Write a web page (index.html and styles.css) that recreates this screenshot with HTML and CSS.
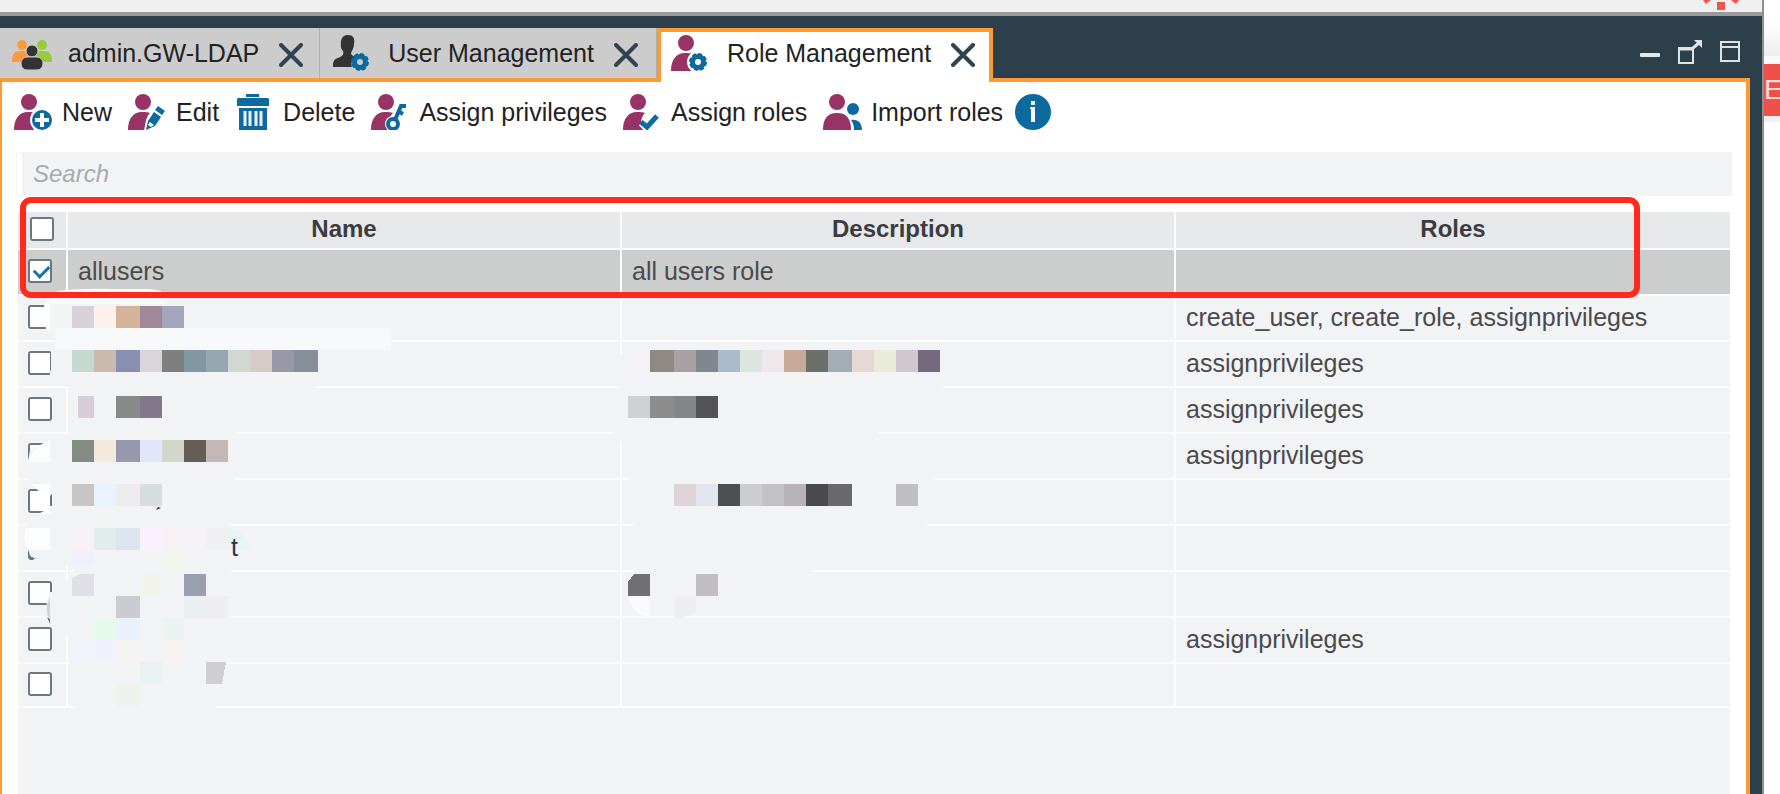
FILE: index.html
```html
<!DOCTYPE html>
<html lang="en">
<head>
    <meta charset="UTF-8">
    <meta name="viewport" content="width=device-width, initial-scale=1.0">
    <title>Role Management</title>
    <link rel="stylesheet" href="styles.css">
</head>
<body>
    <!-- Shared icon parts -->
    <svg class="defs" aria-hidden="true">
        <symbol id="person" viewBox="0 0 40 36">
            <ellipse cx="15" cy="8" rx="8" ry="8"/>
            <path d="M0 36 C0 25 5 18 14 18 C18 18 20 18 22 19 C18 23 17 29 20 36 Z"/>
        </symbol>
        <symbol id="gear" viewBox="0 0 18 18">
            <circle cx="9" cy="9" r="5.5" fill="none" stroke="#0c6a9e" stroke-width="5"/>
            <circle cx="9" cy="9" r="8" fill="none" stroke="#0c6a9e" stroke-width="2" stroke-dasharray="4 2.28"/>
        </symbol>
        <symbol id="cross" viewBox="0 0 24 24">
            <path d="M2 2 L22 22 M22 2 L2 22" fill="none" stroke="#2f4350" stroke-width="4" stroke-linecap="round"/>
        </symbol>
    </svg>

    <div class="window">
        <div class="top-strip">
            <svg class="spinner" width="40" height="12" viewBox="0 0 40 12" fill="#f0544c">
                <rect x="15" y="2" width="8" height="8"/>
                <path d="M1 0 H9 L4 4 Z M29 0 H37 L34 4 Z"/>
            </svg>
        </div>

        <div class="tab-bar">
            <div class="tab tab-first">
                <button type="button" class="tab-label">
                    <svg width="40" height="36" viewBox="0 0 40 36">
                        <g fill="#fc9a3a"><circle cx="10" cy="10" r="5"/><path d="M0 27 C0 19 2 16 9 16 C16 16 19 18 19 27 Z"/></g>
                        <g fill="#97ca3d"><circle cx="30" cy="10" r="5"/><path d="M40 27 C40 19 38 16 31 16 C24 16 21 18 21 27 Z"/></g>
                        <g fill="#333" stroke="#ccc" stroke-width="1"><circle cx="20" cy="16" r="6"/><rect x="9" y="22" width="22" height="13" rx="6"/></g>
                    </svg>
                    admin.GW-LDAP
                </button>
                <button type="button" class="close" aria-label="Close admin.GW-LDAP"><svg width="24" height="24"><use href="#cross"/></svg></button>
            </div>
            <div class="tab">
                <button type="button" class="tab-label">
                    <svg width="40" height="36" viewBox="0 0 40 36">
                        <path fill="#333" d="M16 0 C21 0 23 3 22 9 C22 13 20 15 19 18 C19 21 23 21 24 23 C19 26 19 29 20 32 H1 C1 26 2 24 6 23 C11 21 12 19 11 16 C8 13 9 10 9 6 C10 2 12 0 16 0 Z"/>
                        <use href="#gear" x="19" y="18" width="18" height="18"/>
                    </svg>
                    User Management
                </button>
                <button type="button" class="close" aria-label="Close User Management"><svg width="24" height="24"><use href="#cross"/></svg></button>
            </div>
            <div class="tab tab-active">
                <button type="button" class="tab-label">
                    <svg width="40" height="36" viewBox="0 0 40 36">
                        <use href="#person" width="40" height="36" fill="#993265"/>
                        <circle cx="27" cy="27" r="11" fill="#fff"/>
                        <use href="#gear" x="18" y="18" width="18" height="18"/>
                    </svg>
                    Role Management
                </button>
                <button type="button" class="close" aria-label="Close Role Management"><svg width="24" height="24"><use href="#cross"/></svg></button>
            </div>

            <div class="window-controls">
                <button type="button" aria-label="Minimize">
                    <svg width="24" height="28" viewBox="0 0 24 28"><rect x="2" y="15" width="20" height="4" rx="1" fill="#e4e7e8"/></svg>
                </button>
                <button type="button" aria-label="Restore">
                    <svg width="28" height="28" viewBox="0 0 28 28" fill="none" stroke="#dfe3e5">
                        <path d="M3 10 H17 V25 H3 Z" stroke-width="2"/>
                        <path d="M3 11 H17" stroke-width="3"/>
                        <path d="M17 10 L24 4" stroke-width="3"/>
                        <path d="M18 2 H26 V10 L23 7 Z" fill="#dfe3e5" stroke="none"/>
                    </svg>
                </button>
                <button type="button" aria-label="Maximize">
                    <svg width="24" height="28" viewBox="0 0 24 28" fill="none" stroke="#dfe3e5" stroke-width="2">
                        <path d="M3 4 H21 V23 H3 Z M3 9 H21"/>
                    </svg>
                </button>
            </div>
        </div>

        <div class="panel">
            <div class="toolbar">
                <button type="button">
                    <svg width="40" height="36" viewBox="0 0 40 36">
                        <use href="#person" width="40" height="36" fill="#993265"/>
                        <circle cx="28" cy="26" r="12" fill="#fff"/>
                        <circle cx="28" cy="26" r="10" fill="#0c6a9e"/>
                        <path d="M28 19 V33 M21 26 H35" stroke="#fff" stroke-width="4"/>
                    </svg>
                    New
                </button>
                <button type="button">
                    <svg width="40" height="36" viewBox="0 0 40 36">
                        <use href="#person" width="40" height="36" fill="#993265"/>
                        <path d="M16 37 L18 26 L29 12 L38 17 L27 33 Z" fill="#fff"/>
                        <path d="M18 36 L20 27 L26 18 L33 23 L27 32 Z M27 16 L30 12 L37 17 L34 21 Z" fill="#0c6a9e"/>
                        <path d="M20 31 L22 28 L26 31 L23 33 Z" fill="#fff"/>
                    </svg>
                    Edit
                </button>
                <button type="button">
                    <svg width="40" height="36" viewBox="0 0 40 36" fill="#0c6a9e">
                        <path d="M11 0 H24 V3 H11 Z M3 4 H33 Q34 4 34 6 V12 H2 V6 Q2 4 3 4 Z M4 14 H32 V36 H4 Z"/>
                        <path d="M10 17 V32 M15 17 V32 M21 17 V32 M26 17 V32" stroke="#e8f1f6" stroke-width="3"/>
                    </svg>
                    Delete
                </button>
                <button type="button">
                    <svg width="40" height="36" viewBox="0 0 40 36">
                        <use href="#person" width="40" height="36" fill="#993265"/>
                        <circle cx="22" cy="30" r="8" fill="#fff"/>
                        <g fill="none" stroke="#0c6a9e" stroke-width="4">
                            <circle cx="22" cy="30" r="5"/>
                            <path d="M24 26 L30 12 L35 12 M27 17 L32 20"/>
                        </g>
                    </svg>
                    Assign privileges
                </button>
                <button type="button">
                    <svg width="40" height="36" viewBox="0 0 40 36">
                        <use href="#person" width="40" height="36" fill="#993265"/>
                        <path d="M19 28 L24 33 L34 22" fill="none" stroke="#fff" stroke-width="9"/>
                        <path d="M18 28 L24 33 L34 22" fill="none" stroke="#0c6a9e" stroke-width="5"/>
                    </svg>
                    Assign roles
                </button>
                <button type="button">
                    <svg width="40" height="36" viewBox="0 0 40 36">
                        <g fill="#993265"><circle cx="14" cy="8" r="8"/><path d="M0 36 C0 25 4 19 14 19 C24 19 28 25 28 36 Z"/></g>
                        <g fill="#0c6a9e"><circle cx="30" cy="15" r="6"/><path d="M28 26 C35 25 39 29 39 36 H31 C31 31 30 29 28 26 Z"/></g>
                    </svg>
                    Import roles
                </button>
                <button type="button" class="info" aria-label="Information">
                    <svg width="36" height="36" viewBox="0 0 36 36">
                        <circle cx="18" cy="18" r="18" fill="#0c6a9e"/>
                        <path d="M16 7 H20 V11 H16 Z M15 13 H20 V28 H16 V15 H15 Z" fill="#fff"/>
                    </svg>
                </button>
            </div>

            <input type="text" class="search" placeholder="Search" aria-label="Search">

            <div class="table-area">
                <table>
                    <colgroup>
                        <col class="col-check">
                        <col>
                        <col>
                        <col>
                    </colgroup>
                    <thead>
                        <tr>
                            <th><input type="checkbox" aria-label="Select all"></th>
                            <th>Name</th>
                            <th>Description</th>
                            <th>Roles</th>
                        </tr>
                    </thead>
                    <tbody>
                        <tr class="selected">
                            <td><input type="checkbox" aria-label="Select allusers" checked></td>
                            <td>allusers</td>
                            <td>all users role</td>
                            <td></td>
                        </tr>
                        <tr>
                            <td><input type="checkbox" aria-label="Select row 2"></td>
                            <td></td>
                            <td class="mask-cell">
                                <!-- Hidden descriptions -->
                                <svg class="mask" width="340" height="350" viewBox="612 296 340 350" shape-rendering="crispEdges">
                                    <g fill="#f2f3f5">
                                        <path d="M619 355 Q640 346 700 348 H943 V394 H880 V432 Q866 441 840 441 H618 L612 430 V400 L619 390 Z"/>
                                        <path d="M631 476 H935 V484 L926 530 H640 L624 518 V484 Z"/>
                                        <path d="M635 568 H812 V576 H635 Z"/>
                                    </g>
                                    <path d="M628 350h22v22h-22z" fill="#f4f2f4"/>
                                    <path d="M650 350h24v22h-24z" fill="#8f8983"/>
                                    <path d="M674 350h22v22h-22z" fill="#a8a1a4"/>
                                    <path d="M696 350h22v22h-22z" fill="#82868f"/>
                                    <path d="M718 350h22v22h-22z" fill="#aabccb"/>
                                    <path d="M740 350h22v22h-22z" fill="#dbe7de"/>
                                    <path d="M762 350h22v22h-22z" fill="#efe8ea"/>
                                    <path d="M784 350h22v22h-22z" fill="#c9a999"/>
                                    <path d="M806 350h22v22h-22z" fill="#6a7068"/>
                                    <path d="M828 350h24v22h-24z" fill="#a2aeb3"/>
                                    <path d="M852 350h22v22h-22z" fill="#e5d8d5"/>
                                    <path d="M874 350h22v22h-22z" fill="#eaebd9"/>
                                    <path d="M896 350h22v22h-22z" fill="#cfc9cf"/>
                                    <path d="M918 350h22v22h-22z" fill="#75697f"/>

                                    <path d="M628 396h22v22h-22z" fill="#d0d1d3"/>
                                    <path d="M650 396h24v22h-24z" fill="#8d8d8d"/>
                                    <path d="M674 396h22v22h-22z" fill="#858688"/>
                                    <path d="M696 396h22v22h-22z" fill="#545456"/>

                                    <path d="M674 484h22v22h-22z" fill="#dfd5d8"/>
                                    <path d="M696 484h22v22h-22z" fill="#e1e6ee"/>
                                    <path d="M718 484h22v22h-22z" fill="#4e4f51"/>
                                    <path d="M740 484h22v22h-22z" fill="#cdcdcf"/>
                                    <path d="M762 484h22v22h-22z" fill="#c2c2c4"/>
                                    <path d="M784 484h22v22h-22z" fill="#b7b3b7"/>
                                    <path d="M806 484h22v22h-22z" fill="#4a4a4c"/>
                                    <path d="M828 484h24v22h-24z" fill="#69696b"/>
                                    <path d="M896 484h22v22h-22z" fill="#bfbfc1"/>

                                    <path d="M650 574v22h-22v-14l6-8z" fill="#707072"/>
                                    <path d="M696 574h22v22h-22z" fill="#c1bec1"/>
                                    <path d="M628 596h22v22q-18-4-22-22z" fill="#fbfbfd"/>
                                    <path d="M674 596h22v16l-14 6h-8z" fill="#eeeef0"/>
                                </svg>
                            </td>
                            <td>create_user, create_role, assignprivileges</td>
                        </tr>
                        <tr>
                            <td><input type="checkbox" aria-label="Select row 3"></td>
                            <td></td>
                            <td></td>
                            <td>assignprivileges</td>
                        </tr>
                        <tr>
                            <td><input type="checkbox" aria-label="Select row 4"></td>
                            <td></td>
                            <td></td>
                            <td>assignprivileges</td>
                        </tr>
                        <tr>
                            <td><input type="checkbox" aria-label="Select row 5"></td>
                            <td></td>
                            <td></td>
                            <td>assignprivileges</td>
                        </tr>
                        <tr>
                            <td><input type="checkbox" aria-label="Select row 6"></td>
                            <td></td>
                            <td></td>
                            <td></td>
                        </tr>
                        <tr>
                            <td><input type="checkbox" aria-label="Select row 7"></td>
                            <td class="name-tail"><span>t</span></td>
                            <td></td>
                            <td></td>
                        </tr>
                        <tr>
                            <td><input type="checkbox" aria-label="Select row 8"></td>
                            <td></td>
                            <td></td>
                            <td></td>
                        </tr>
                        <tr>
                            <td><input type="checkbox" aria-label="Select row 9"></td>
                            <td></td>
                            <td></td>
                            <td>assignprivileges</td>
                        </tr>
                        <tr class="last">
                            <td><input type="checkbox" aria-label="Select row 10"></td>
                            <td></td>
                            <td></td>
                            <td></td>
                        </tr>
                    </tbody>
                </table>

                <!-- Hidden names -->
                <svg class="mask-names" width="400" height="520" viewBox="18 212 400 520">
                    <g fill="#f2f3f5">
                        <path d="M58 291 Q80 288 110 289 H150 Q160 290 167 294 V306 H50 L46 302 Z" fill="#f8f9fb"/>
                        <path d="M50 304 H190 V328 H391 V350 H320 V378 Q318 386 310 389 H80 Q56 386 51 375 V350 L56 346 L50 329 Z"/>
                        <path d="M55 328 H391 V350 H55 Z" fill="#f7f8fa"/>
                        <path d="M78 386 H240 V426 L234 438 H198 V430 H78 Z"/>
                        <path d="M78 430 H198 V436 H234 V484 H230 V530 H231 V570 H90 L66 566 H50 L30 556 L26 540 V524 H50 V484 L28 480 V462 L30 450 L50 441 L66 434 Z"/>
                        <path d="M72 571 Q90 566 231 568 V620 H225 V676 L214 712 H80 L70 704 V640 L66 634 V581 H72 Z"/>
                        <path d="M50 592 Q43 606 50 624 H66 V592 Z"/>
                    </g>
                    <path d="M44 304 H50 V330 H46 Z M50 350 V376 H52 L49 366 Z" fill="#fff"/>
                    <path d="M50 440 V462 H28 Q30 448 50 440 Z M31 484 H50 V508 L38 514 H50 V492 H40 Z M26 528 H50 V550 H28 Q22 540 26 528 Z" fill="#fcfdff"/>
                    <path d="M28 550 H50 V564 Q36 562 28 550 Z" fill="#edf4fa"/>
                    <path d="M50 597 Q43 610 50 620 Z" fill="#cdd3d7"/>
                    <path d="M50 496 L52 494 V506 H50 Z" fill="#6b7880"/>
                    <path d="M28 553 L34 560 H30 L28 558 Z M47 617 L50 619 V624 Z" fill="#6b7880"/>
                    <path d="M228 528 Q246 530 250 550 H228 Z" fill="#e6f5f1"/>
                    <path d="M156 510 L158 507 L161 508 Z" fill="#333"/>

                    <g shape-rendering="crispEdges">
                        <path d="M72 306h22v22h-22z" fill="#d8d1d9"/>
                        <path d="M94 306h22v22h-22z" fill="#fdf1ec"/>
                        <path d="M116 306h24v22h-24z" fill="#d3b498"/>
                        <path d="M140 306h22v22h-22z" fill="#a0879a"/>
                        <path d="M162 306h22v22h-22z" fill="#a4a6bd"/>

                        <path d="M72 350h22v22h-22z" fill="#c6d9d0"/>
                        <path d="M94 350h22v22h-22z" fill="#ccb9ae"/>
                        <path d="M116 350h24v22h-24z" fill="#888fb0"/>
                        <path d="M140 350h22v22h-22z" fill="#d8d6d8"/>
                        <path d="M162 350h22v22h-22z" fill="#7e7f7f"/>
                        <path d="M184 350h22v22h-22z" fill="#8098a1"/>
                        <path d="M206 350h22v22h-22z" fill="#97a7b1"/>
                        <path d="M228 350h22v22h-22z" fill="#d1d8d1"/>
                        <path d="M250 350h22v22h-22z" fill="#d5cbc9"/>
                        <path d="M272 350h22v22h-22z" fill="#9798a8"/>
                        <path d="M294 350h24v22h-24z" fill="#888f9a"/>

                        <path d="M78 396h16v22h-16z" fill="#d7cdd6"/>
                        <path d="M116 396h24v22h-24z" fill="#888989"/>
                        <path d="M140 396h22v22h-22z" fill="#82778b"/>

                        <path d="M72 440h22v22h-22z" fill="#838b83"/>
                        <path d="M94 440h22v22h-22z" fill="#f3eadd"/>
                        <path d="M116 440h24v22h-24z" fill="#9798ad"/>
                        <path d="M140 440h22v22h-22z" fill="#e3e6fa"/>
                        <path d="M162 440h22v22h-22z" fill="#d5d6ca"/>
                        <path d="M184 440h22v22h-22z" fill="#665c56"/>
                        <path d="M206 440h22v22h-22z" fill="#c3b8b6"/>

                        <path d="M72 484h22v22h-22z" fill="#c7c6c5"/>
                        <path d="M94 484h22v22h-22z" fill="#e8f3fe"/>
                        <path d="M116 484h24v22h-24z" fill="#ececee"/>
                        <path d="M140 484h22v22h-22z" fill="#d5dddf"/>

                        <path d="M72 528h22v22h-22z" fill="#f7f1f6"/>
                        <path d="M94 528h22v22h-22z" fill="#e0edeb"/>
                        <path d="M116 528h24v22h-24z" fill="#dce5ef"/>
                        <path d="M140 528h22v22h-22z" fill="#fbf0fd"/>
                        <path d="M162 528h44v22h-44z" fill="#f6f1f4"/>
                        <path d="M206 528h22v22h-22z" fill="#efeff4"/>
                        <path d="M72 550h22v16h-22z" fill="#f1effa"/>
                        <path d="M162 550h22v24h-22z" fill="#f2f4ee"/>

                        <path d="M94 574v22h-22v-18l8-4z" fill="#e0dfe5"/>
                        <path d="M140 574h22v22h-22z" fill="#f2f3ed"/>
                        <path d="M184 574h22v22h-22z" fill="#9a9fb0"/>
                        <path d="M116 596h24v22h-24z" fill="#cbccd2"/>
                        <path d="M184 596h22v22h-22z" fill="#eaeff2"/>
                        <path d="M206 596h22v22h-22z" fill="#eeeef0"/>

                        <path d="M94 618h22v22h-22z" fill="#e6f9ed"/>
                        <path d="M116 618h24v22h-24z" fill="#ebf1fb"/>
                        <path d="M162 618h22v22h-22z" fill="#e9f4f1"/>
                        <path d="M72 640h22v22h-22z" fill="#f2f2fa"/>
                        <path d="M94 640h22v22h-22z" fill="#f1f1fe"/>
                        <path d="M116 640h24v22h-24z" fill="#f6f2ef"/>
                        <path d="M162 640h22v22h-22z" fill="#f7f2f0"/>
                        <path d="M140 662h22v22h-22z" fill="#e9f2f1"/>
                        <path d="M116 684h24v22h-24z" fill="#edf3eb"/>
                        <path d="M206 662h20l-4 22h-16z" fill="#cfcfd1"/>
                    </g>
                </svg>

                <div class="highlight"></div>
            </div>
        </div>
    </div>

    <div class="behind">
        <div class="behind-head"></div>
        <div class="behind-banner">E</div>
    </div>
</body>
</html>
```

FILE: styles.css
```css
* {
    box-sizing: border-box;
}
body {
    margin: 0;
    display: flex;
    height: 100vh;
    overflow: hidden;
    background-color: #fff;
    color: #222;
    font-family: "Liberation Sans", Arial, sans-serif;
    font-size: 25px;
}
button {
    padding: 0;
    border: none;
    background: none;
    color: inherit;
    font: inherit;
    white-space: nowrap;
    cursor: pointer;
}
svg {
    display: block;
    flex: none;
}
.defs {
    position: absolute;
    width: 0;
    height: 0;
}

/* Main window */
.window {
    flex: 1;
    min-width: 0;
    display: flex;
    flex-direction: column;
    background-color: #2e3f4c;
    border-right: 2px solid #8c8e90;
}
.top-strip {
    display: flex;
    justify-content: flex-end;
    height: 16px;
    padding-right: 20px;
    background-color: #efefef;
    border-bottom: 4px solid #9b9b9b;
}
.tab-bar {
    display: flex;
    height: 66px;
    padding-top: 12px;
    margin-right: 12px;
    background: linear-gradient(#fe9a33, #fe9a33) bottom / 100% 4px no-repeat;
}
.tab {
    display: flex;
    align-items: center;
    gap: 20px;
    height: 50px;
    padding: 0 18px 0 12px;
    background-color: #ccc;
    border-right: 1px solid #b0b0b0;
}
.tab-first {
    padding-right: 16px;
}
.tab-active {
    height: 54px;
    padding: 0 14px 8px 10px;
    background-color: #fff;
    border: 4px solid #fe9a33;
    border-bottom: none;
}
.tab-label {
    display: flex;
    align-items: center;
    gap: 16px;
}
.close {
    padding-top: 4px;
}
.window-controls {
    display: flex;
    align-items: center;
    gap: 14px;
    height: 48px;
    margin-left: auto;
    padding-right: 8px;
}

/* Panel */
.panel {
    flex: 1;
    min-height: 0;
    display: flex;
    flex-direction: column;
    margin-right: 12px;
    padding: 12px 14px 0 14px;
    background-color: #fff;
    border-left: 2px solid #fe9a33;
    border-right: 4px solid #fe9a33;
}
.toolbar {
    display: flex;
    gap: 16px;
    height: 58px;
    margin-left: -2px;
}
.toolbar button {
    display: flex;
    align-items: center;
    gap: 8px;
    height: 36px;
}
.toolbar .info {
    margin-left: -4px;
}
.search {
    height: 44px;
    flex: none;
    padding: 0 16px;
    background-color: #f2f3f5;
    border: 1px solid #f4f4f5;
    box-shadow: inset 5px 0 #fff;
    border-radius: 0;
    font-family: inherit;
    font-size: 24px;
    font-style: italic;
}
.search::placeholder {
    color: #aaa;
    opacity: 1;
}

/* Roles table */
.table-area {
    flex: 1;
    position: relative;
    margin: 16px 2px 0;
    background-color: #f2f3f5;
}
table {
    width: 100%;
    table-layout: fixed;
    border-collapse: separate;
    border-spacing: 0;
}
.col-check {
    width: 50px;
}
th, td {
    height: 46px;
    padding: 0 10px 2px;
    border-right: 2px solid #fcfcfc;
    border-bottom: 2px solid #fcfcfc;
    color: #4a4a4c;
    text-align: left;
    white-space: nowrap;
}
th:last-child, td:last-child {
    border-right: none;
}
th {
    height: 38px;
    background-color: #e7e8ea;
    color: #3c3c40;
    font-size: 24px;
    text-align: center;
}
.selected td {
    background-color: #cccecd;
}
.last td {
    height: 44px;
}
th input[type="checkbox"] {
    margin-left: 2px;
}
input[type="checkbox"] {
    appearance: none;
    display: block;
    width: 24px;
    height: 24px;
    margin: 0;
    background-color: #fff;
    border: 2px solid #6b7880;
    border-radius: 3px;
}
input[type="checkbox"]:checked::before {
    content: "";
    display: block;
    width: 12px;
    height: 7px;
    margin: 4px 0 0 4px;
    border-left: 3px solid #1874a8;
    border-bottom: 3px solid #1874a8;
    transform: rotate(-45deg);
}
.mask-cell {
    position: relative;
}
.mask {
    position: absolute;
    top: 0;
    left: -10px;
}
.mask-names {
    position: absolute;
    top: 0;
    left: 0;
}
.name-tail {
    padding-left: 163px;
}
.name-tail span {
    position: relative;
    z-index: 1;
    color: #3a2a50;
}
.highlight {
    position: absolute;
    top: -15px;
    left: 2px;
    right: 90px;
    height: 101px;
    border: 6px solid #ff2a1c;
    border-radius: 11px;
}

/* Page showing behind the window */
.behind {
    width: 16px;
    overflow: hidden;
}
.behind-head {
    height: 56px;
    background: linear-gradient(#fff 20px, #eee);
}
.behind-banner {
    height: 66px;
    border-top: 8px solid #fafafa;
    border-bottom: 6px solid #f1f1f1;
    background-color: #ef5148;
    color: #fbdcda;
    font-size: 28px;
    line-height: 52px;
}
```
